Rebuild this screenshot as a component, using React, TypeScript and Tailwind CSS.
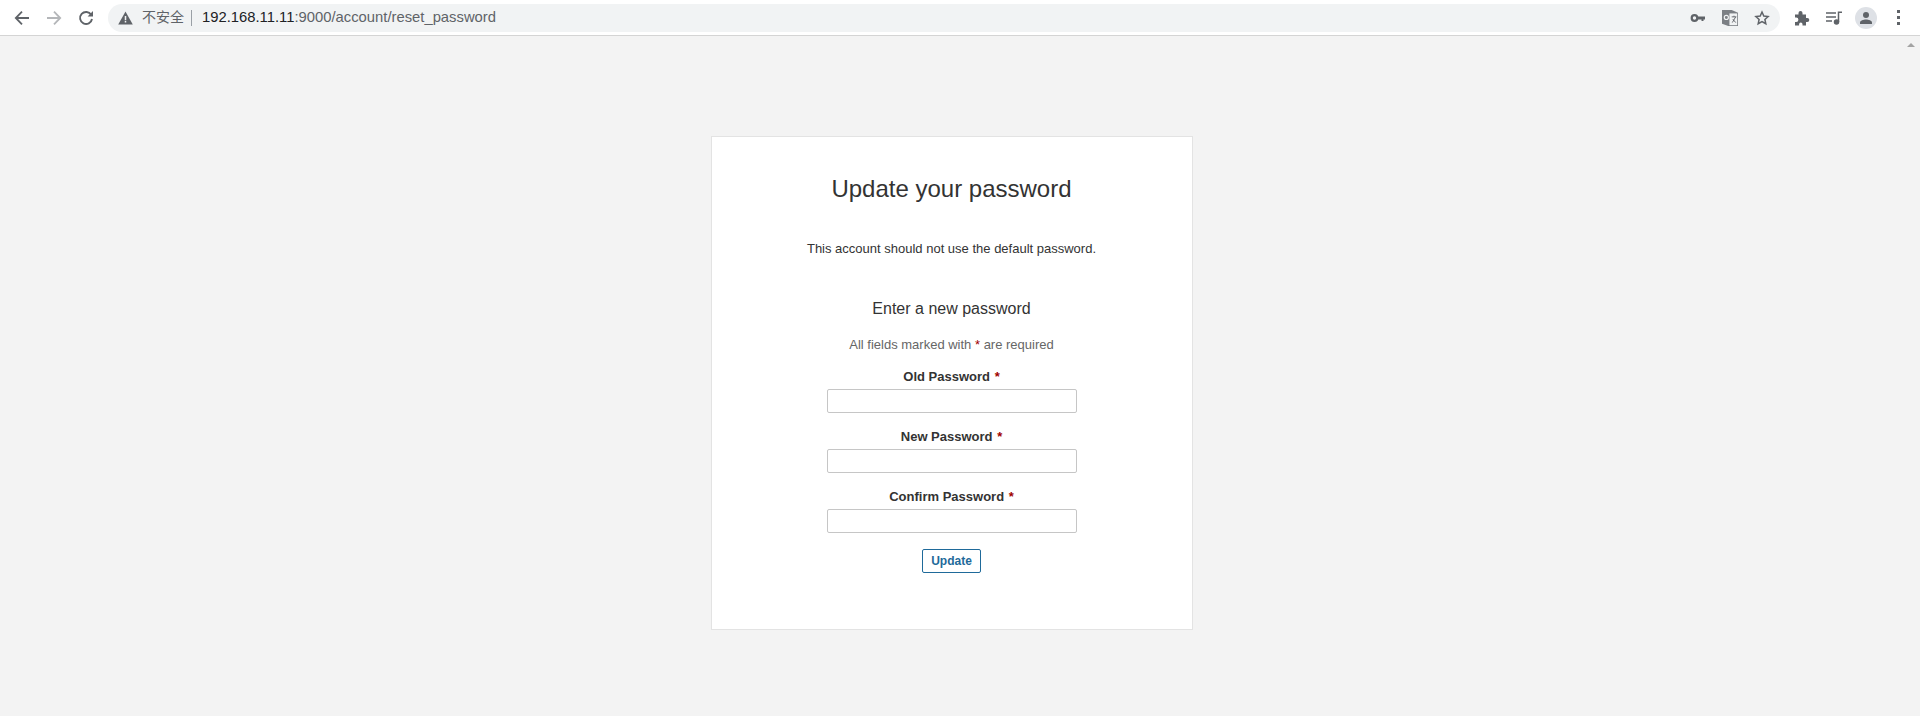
const fontArial = 'font-["Liberation_Sans","Noto_Sans_CJK_SC",sans-serif]'

function BackIcon({ color }: { color: string }) {
  return (
    <svg width="16" height="16" viewBox="0 0 16 16" fill="none" stroke={color} strokeWidth="1.8">
      <path d="M15 8H2M8 1.700 1.800 8 8 14.300" />
    </svg>
  )
}

function Field({ label }: { label: string }) {
  return (
    <div className="flex flex-col items-center">
      <label className="h-[21px] text-[13px] leading-[21px] font-bold text-[#333]">
        {label} <span className="ml-[1px] text-[#a00000]">*</span>
      </label>
      <input type="password" className="mt-[2px] h-[24px] w-[250px] rounded-[2px] border border-[#c6c6c6] bg-white" />
    </div>
  )
}

export default function App() {
  return (
    <div className={`flex h-[716px] flex-col overflow-hidden bg-[#f3f3f3] ${fontArial}`}>
      <header className="flex h-[36px] shrink-0 items-center border-b border-[#d4d4d4] bg-white">
        <div className="flex w-[108px] items-center pl-[14px]">
          <BackIcon color="#5f6368" />
          <div className="ml-[16px] rotate-180">
            <BackIcon color="#b4b6b9" />
          </div>
          <svg className="ml-[16px]" width="16" height="16" viewBox="0 0 16 16" fill="none">
            <path d="M13.200 4.800A6 6 0 1 0 14 9" stroke="#5f6368" strokeWidth="1.900" />
            <path d="M9.600 6.400H15V1z" fill="#5f6368" />
          </svg>
        </div>
        <div className="flex h-[28px] w-[1672px] items-center rounded-full bg-[#f1f3f4] pl-[10px]">
          <svg width="15" height="14" viewBox="0 0 14 13">
            <path d="M7 .5 13.800 12.500H.2z" fill="#5f6368" />
            <path d="M6.300 4.600h1.400v4H6.300zM6.300 9.400h1.400v1.400H6.300z" fill="#f1f3f4" />
          </svg>
          <span className="ml-[9px] text-[14px] text-[#5f6368]">不安全</span>
          <span className="ml-[7px] h-[16px] w-px bg-[#9aa0a6]" />
          <span className="ml-[10px] text-[14.800px] whitespace-nowrap text-[#202124]">
            192.168.11.11<span className="text-[#5f6368]">:9000/account/reset_password</span>
          </span>
          <div className="ml-auto flex items-center gap-[16px] pr-[10px]">
            <svg width="16" height="14" viewBox="0 0 16 14" fill="none" stroke="#5f6368">
              <circle cx="4.500" cy="7" r="2.800" strokeWidth="2.200" />
              <path d="M7 7h8" strokeWidth="3" />
              <path d="M12.500 8v2" strokeWidth="2" />
            </svg>
            <svg width="16" height="16" viewBox="0 0 14 14">
              <path d="M0 0h8.500L14 2.500V14H5.500L0 12z" fill="#7b7f84" />
              <path d="M6.500 3h6.800v10.300H6.500z" fill="#f1f3f4" />
              <path d="M8.500 6h4M10.500 5v1M9 11l3-5M9.500 8l2.500 3" stroke="#5f6368" strokeWidth=".8" fill="none" />
              <circle cx="3.800" cy="6.500" r="1.800" stroke="#f1f3f4" fill="none" />
            </svg>
            <svg width="16" height="16" viewBox="0 0 16 16" fill="none" stroke="#5f6368" strokeWidth="1.500">
              <path d="m8 2 1.800 4 4.300.5-3.200 2.900.9 4.300L8 11.500l-3.800 2.200.9-4.300L1.900 6.500 6.200 6z" />
            </svg>
          </div>
        </div>
        <div className="flex flex-1 items-center pl-[14px]">
          <svg width="16" height="16" viewBox="0 0 16 16" fill="#5f6368">
            <path d="M1 4.500h3.500V3a2 2 0 0 1 4 0v1.500H12V8h1.300a2 2 0 0 1 0 4H12v3.500H8.500v-1.300a1.700 1.700 0 0 0-3.400 0v1.300H1v-3.500h1.200a2.200 2.200 0 0 0 0-4.400H1z" />
          </svg>
          <svg className="ml-[16px]" width="16" height="14" viewBox="0 0 16 14" fill="none" stroke="#5f6368" strokeWidth="1.500">
            <path d="M0 2h10M0 6h10M0 10h6" />
            <path d="M12.500 11V1.200H16" />
            <circle cx="10.500" cy="11" r="2" fill="#5f6368" />
          </svg>
          <div className="ml-[13px] flex h-[22px] w-[22px] items-center justify-center rounded-full bg-[#dee1e6]">
            <svg width="14" height="14" viewBox="0 0 14 14" fill="#5f6368">
              <circle cx="7" cy="4" r="3" />
              <path d="M1 13v-1.500c0-2 3.500-3 6-3s6 1 6 3V13z" />
            </svg>
          </div>
          <div className="ml-[20px] flex flex-col gap-[3px]">
            <span className="h-[3px] w-[3px] bg-[#5f6368]" />
            <span className="h-[3px] w-[3px] bg-[#5f6368]" />
            <span className="h-[3px] w-[3px] bg-[#5f6368]" />
          </div>
        </div>
      </header>

      <div className="flex flex-1">
        <main className="flex flex-1 justify-center pt-[100px]">
          <section className="flex h-[494px] w-[482px] flex-col items-center border border-[#e3e3e3] bg-white pt-[35px]">
            <h1 className="text-[24px] leading-[34px] text-[#333]">Update your password</h1>
            <p className="mt-[33px] text-[13px] leading-[20px] text-[#333]">This account should not use the default password.</p>
            <h2 className="mt-[38px] text-[16px] leading-[24px] text-[#333]">Enter a new password</h2>
            <p className="mt-[14px] text-[13px] leading-[20px] text-[#666]">
              All fields marked with <span className="text-[#a00000]">*</span> are required
            </p>
            <form className="mt-[11px] flex flex-col items-center gap-[13px]">
              <Field label="Old Password" />
              <Field label="New Password" />
              <Field label="Confirm Password" />
              <button type="button" className="mt-[3px] h-[24px] w-[59px] rounded-[2px] border border-[#1f6a9a] bg-white text-[12px] font-bold text-[#1f6a9a]">
                Update
              </button>
            </form>
          </section>
        </main>
        <aside className="w-[17px] shrink-0 pt-[7px] pl-[4px]">
          <div className="h-0 w-0 border-x-[4px] border-b-[4px] border-x-transparent border-b-[#a3a3a3]" />
        </aside>
      </div>
    </div>
  )
}
